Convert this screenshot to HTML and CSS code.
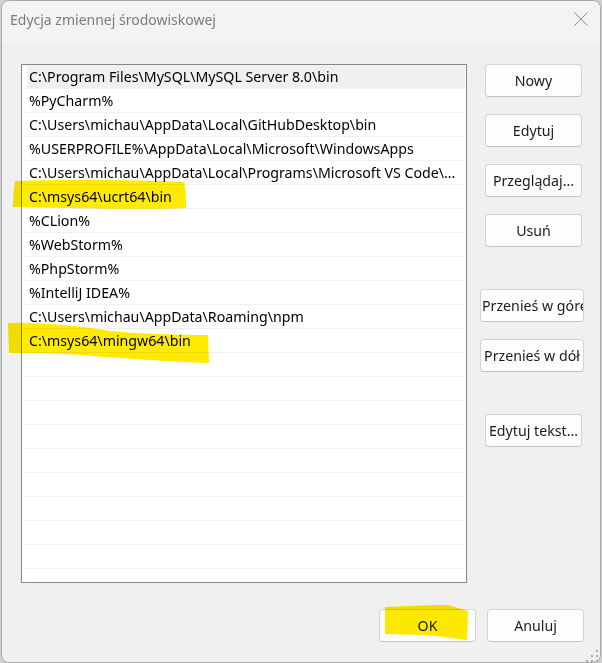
FILE: index.html
```html
<!DOCTYPE html>
<html lang="pl">
<head>
<meta charset="utf-8">
<title>Edycja zmiennej środowiskowej</title>
<link rel="stylesheet" href="styles.css">
</head>
<body>
<div class="window">
  <div class="titlebar">
    <span class="title">Edycja zmiennej środowiskowej</span>
    <svg class="close" width="14" height="14" viewBox="0 0 14 14"><path d="M0.5 0.5 L13.5 13.5 M13.5 0.5 L0.5 13.5" stroke="#8a8a8a" stroke-width="1" fill="none"/></svg>
  </div>
  <div class="content">
    <div class="main">
      <div class="list">
        <div class="row selected">C:\Program Files\MySQL\MySQL Server 8.0\bin</div>
        <div class="row">%PyCharm%</div>
        <div class="row">C:\Users\michau\AppData\Local\GitHubDesktop\bin</div>
        <div class="row">%USERPROFILE%\AppData\Local\Microsoft\WindowsApps</div>
        <div class="row">C:\Users\michau\AppData\Local\Programs\Microsoft VS Code\bin</div>
        <div class="row">C:\msys64\ucrt64\bin</div>
        <div class="row">%CLion%</div>
        <div class="row">%WebStorm%</div>
        <div class="row">%PhpStorm%</div>
        <div class="row">%IntelliJ IDEA%</div>
        <div class="row">C:\Users\michau\AppData\Roaming\npm</div>
        <div class="row">C:\msys64\mingw64\bin</div>
        <div class="row"></div>
        <div class="row"></div>
        <div class="row"></div>
        <div class="row"></div>
        <div class="row"></div>
        <div class="row"></div>
        <div class="row"></div>
        <div class="row"></div>
        <div class="row"></div>
        <div class="row"></div>
      </div>
      <div class="side">
        <button class="btn narrow">Nowy</button>
        <button class="btn narrow">Edytuj</button>
        <button class="btn narrow">Przeglądaj...</button>
        <button class="btn narrow">Usuń</button>
        <button class="btn wide clip sep">Przenieś w górę</button>
        <button class="btn wide">Przenieś w dół</button>
        <button class="btn narrow sep">Edytuj tekst...</button>
      </div>
    </div>
    <div class="footer">
      <button class="btn foot">OK</button>
      <button class="btn foot">Anuluj</button>
    </div>
  </div>
</div>
<svg class="marks" width="602" height="663" viewBox="0 0 602 663">
  <path d="M15,181 C60,179 150,180 184,182 C186,190 186,200 186,208 C150,210 60,208 13,207 C13,198 14,188 15,181 Z" fill="#ffea00"/>
  <path d="M8,323 C40,322 80,326 110,331 C140,334 180,335 208,335 L209,363 C170,362 120,358 80,355 C50,353 25,353 9,353 Z" fill="#ffea00"/>
  <path d="M385,607 C410,606 430,605 447,605 C455,607 462,609 468,611 L467,640 C455,639 440,636 425,635 L385,634 Z" fill="#ffea00"/>
</svg>
<svg class="grip" width="16" height="14" viewBox="0 0 16 14">
  <rect x="11" y="1" width="2" height="2" fill="#a8a8a8"/>
  <rect x="6" y="6" width="2" height="2" fill="#a8a8a8"/>
  <rect x="11" y="6" width="2" height="2" fill="#a8a8a8"/>
  <rect x="1" y="11" width="2" height="2" fill="#a8a8a8"/>
  <rect x="6" y="11" width="2" height="2" fill="#a8a8a8"/>
  <rect x="11" y="11" width="2" height="2" fill="#a8a8a8"/>
</svg>
</body>
</html>
```

FILE: styles.css
```css
html, body {
  margin: 0;
  padding: 0;
}
body {
  width: 602px;
  height: 663px;
  background: #cfd0d2;
  font-family: "Noto Sans", "Open Sans", sans-serif;
  font-size: 14px;
  color: #000;
  overflow: hidden;
  position: relative;
}
.window {
  margin-left: 1px;
  width: 600px;
  height: 663px;
  box-sizing: border-box;
  border: 1px solid #a9a9a9;
  border-radius: 8px;
  background: #f0f0f0;
  overflow: hidden;
  display: flex;
  flex-direction: column;
}
.titlebar {
  height: 42px;
  flex: none;
  background: #f3f3f3;
  display: flex;
  justify-content: space-between;
  align-items: flex-start;
  padding: 8px 12px 0 8px;
  box-sizing: border-box;
}
.title {
  line-height: 22px;
  color: #7c7c7c;
  font-size: 14px;
}
.close {
  margin-top: 3px;
  display: block;
}
.content {
  padding: 21px 16px 0 19px;
}
.main {
  display: flex;
  gap: 13px;
  align-items: flex-start;
}
.list {
  width: 448px;
  height: 519px;
  box-sizing: border-box;
  border: 1px solid #828790;
  background: #fff;
  padding: 0 1px;
  overflow: hidden;
}
.row {
  height: 24px;
  box-sizing: border-box;
  border-bottom: 1px solid #efefef;
  padding: 0 6px 0 6px;
  line-height: 23px;
  font-size: 14.2px;
  white-space: nowrap;
  overflow: hidden;
  text-overflow: ellipsis;
}
.row.selected {
  background: linear-gradient(to right, #fff 4px, #f0f0f0 4px);
}
.side {
  width: 104px;
  display: flex;
  flex-direction: column;
  gap: 17px;
}
.btn {
  font-family: inherit;
  font-size: 14.2px;
  color: #1b1b1b;
  background: #fdfdfd;
  border: 1px solid #d3d3d3;
  border-bottom-color: #c2c2c2;
  border-radius: 4px;
  height: 33px;
  padding: 0;
  box-sizing: border-box;
  white-space: nowrap;
  overflow: hidden;
}
.narrow {
  width: 97px;
  margin-left: 5px;
}
.wide {
  width: 104px;
}
.clip {
  text-align: left;
  padding-left: 1px;
}
.sep {
  margin-top: 25px;
}
.footer {
  margin-top: 26px;
  display: flex;
  justify-content: flex-end;
  gap: 11px;
}
.foot {
  width: 97px;
}
.marks {
  position: absolute;
  left: 0;
  top: 0;
  pointer-events: none;
  mix-blend-mode: multiply;
}
.grip {
  position: absolute;
  left: 585px;
  top: 649px;
}
```
